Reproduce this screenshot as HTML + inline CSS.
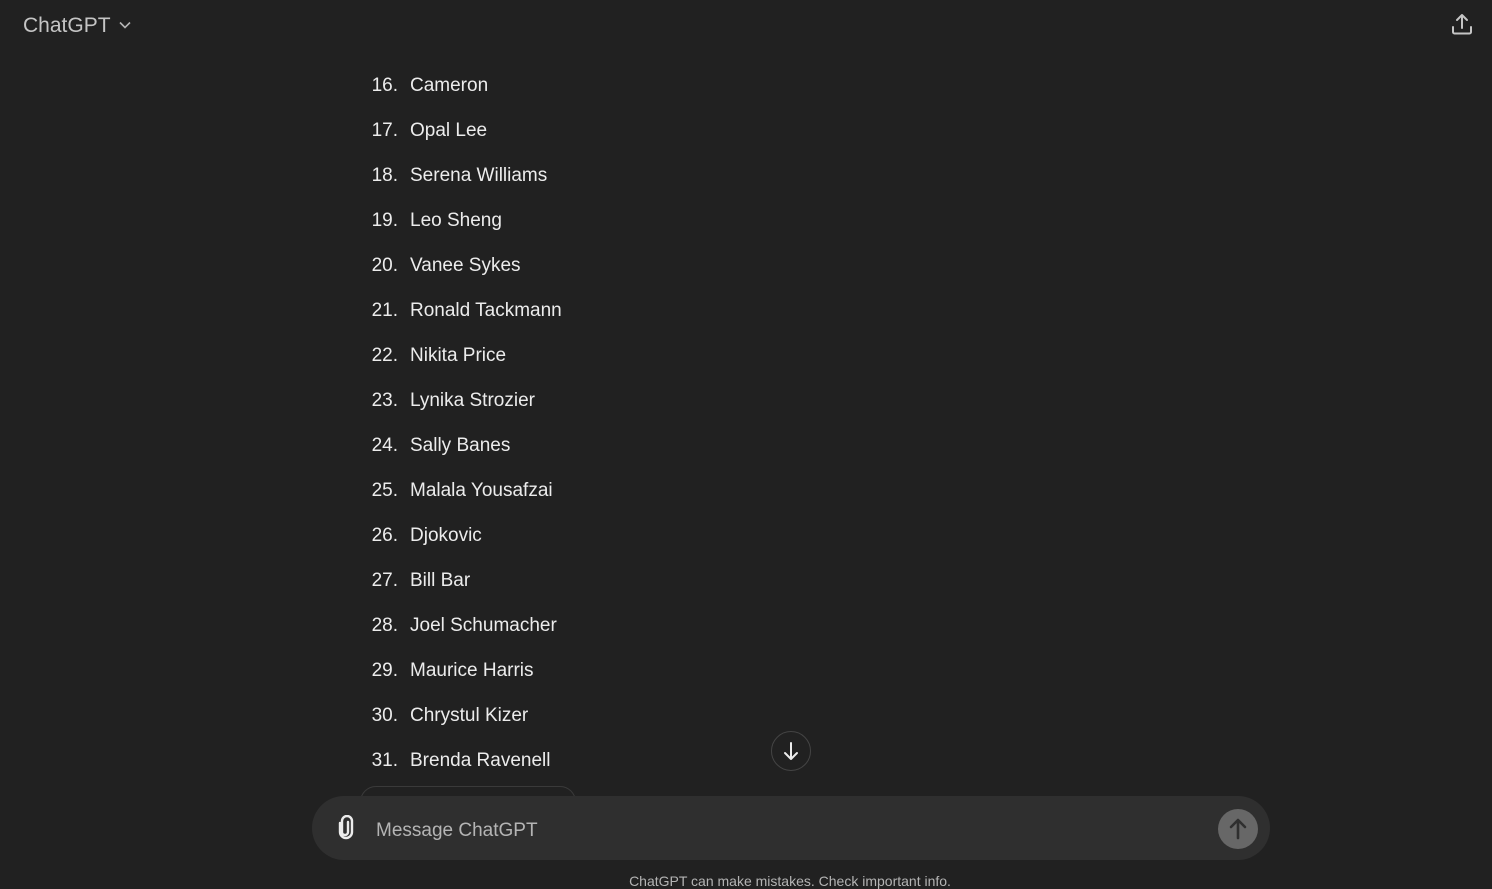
<!DOCTYPE html>
<html><head><meta charset="utf-8"><style>
html,body{margin:0;padding:0;background:#212121;width:1492px;height:887px;overflow:hidden;font-family:"Liberation Sans",sans-serif;color:#ececec}
.hdr{position:absolute;left:23px;top:14px;font-size:21px;color:#c5c5c5;}
.row{position:absolute;left:0;height:24px;font-size:19px;line-height:24px;color:#ececec}
.name{position:absolute;left:410px;white-space:nowrap}
.bar{position:absolute;left:312px;top:796px;width:958px;height:64px;border-radius:32px;background:#2f2f2f}
.foot{position:absolute;left:0;width:1580px;text-align:center;top:873px;font-size:14px;color:#b4b4b4}
</style></head><body>
<div class="hdr">ChatGPT <svg width="14" height="14" viewBox="0 0 14 14" style="margin-left:2px"><path d="M2 4.5l5 5 5-5" stroke="#b4b4b4" stroke-width="1.6" fill="none"/></svg></div>
<svg style="position:absolute;left:1450px;top:12px" width="24" height="24" viewBox="0 0 24 24"><path d="M12 3v13M7 8l5-5 5 5M3 15v5a1.5 1.5 0 0 0 1.5 1.5h15A1.5 1.5 0 0 0 21 20v-5" stroke="#c5c5c5" stroke-width="2" fill="none" stroke-linecap="round" stroke-linejoin="round"/></svg>
<div id="list"></div>
<div style="position:absolute;left:360px;top:786px;width:214px;height:30px;border:1px solid #3a3a3a;border-radius:16px"></div>
<div style="position:absolute;left:771px;top:731px;width:38px;height:38px;border:1px solid #444;border-radius:50%;background:#212121"><svg width="38" height="38" viewBox="0 0 38 38"><path d="M19 11v16M13 21l6 6 6-6" stroke="#ececec" stroke-width="2" fill="none" stroke-linecap="round" stroke-linejoin="round"/></svg></div>
<div class="bar">
<svg style="position:absolute;left:22px;top:19px" width="24" height="26" viewBox="0 0 24 26"><path d="M14 7v10a3 3 0 0 1-6 0V6a5 5 0 0 1 10 0v11a6 6 0 0 1-12 0V8" stroke="#ececec" stroke-width="2.4" fill="none" stroke-linecap="round"/></svg>
<div style="position:absolute;left:64px;top:24px;font-size:19px;color:#b4b4b4">Message ChatGPT</div>
<div style="position:absolute;left:906px;top:13px;width:40px;height:40px;border-radius:50%;background:#676767"><svg width="40" height="40" viewBox="0 0 40 40"><path d="M20 29V12M13 18l7-7 7 7" stroke="#2f2f2f" stroke-width="2.6" fill="none" stroke-linecap="round" stroke-linejoin="round"/></svg></div>
</div>
<div class="foot">ChatGPT can make mistakes. Check important info.</div>
<script>
var n=["Cameron","Opal Lee","Serena Williams","Leo Sheng","Vanee Sykes","Ronald Tackmann","Nikita Price","Lynika Strozier","Sally Banes","Malala Yousafzai","Djokovic","Bill Bar","Joel Schumacher","Maurice Harris","Chrystul Kizer","Brenda Ravenell"];
var h="";n.forEach(function(x,i){var t=74+45*i;h+='<div class="row" style="top:'+t+'px;width:0"><span style="position:absolute;left:338px;width:60px;text-align:right">'+(16+i)+'.</span><span class="name">'+x+'</span></div>';});
document.getElementById("list").innerHTML=h;
</script>
</body></html>
